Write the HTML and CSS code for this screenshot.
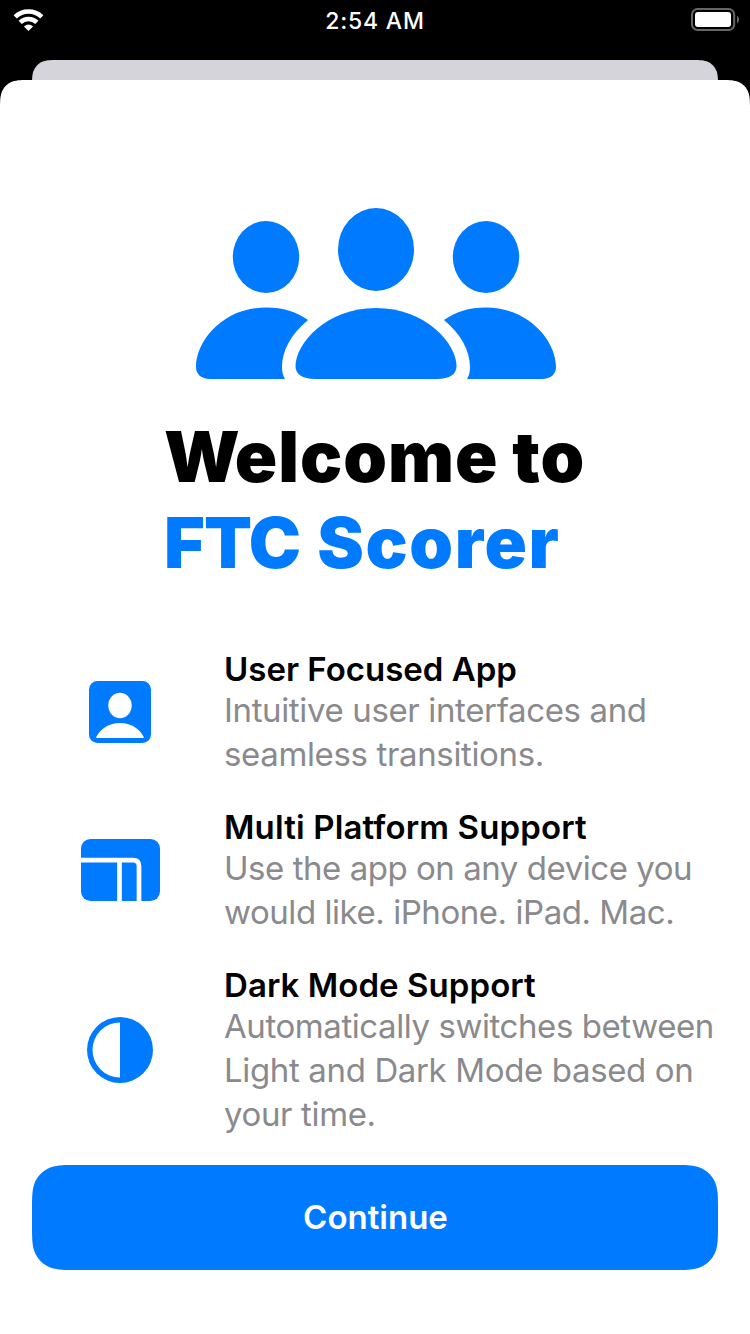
FILE: index.html
```html
<!DOCTYPE html>
<html lang="en">
<head>
<meta charset="utf-8">
<title>Welcome to FTC Scorer</title>
<link rel="stylesheet" href="styles.css">
</head>
<body>
<div class="screen">
  <header class="status">
    <svg class="wifi" viewBox="13 8 32 24" aria-hidden="true">
      <g fill="none" stroke="#fff" stroke-width="4.6">
        <path d="M15.2 16.8A19.2 19.2 0 0 1 41.8 16.8"/>
        <path d="M20.2 22.3A12 12 0 0 1 36.8 22.3"/>
      </g>
      <path fill="#fff" d="M28.5 31L23.9 26.4Q28.5 22.6 33.1 26.4Z"/>
    </svg>
    <time class="clock">2:54 AM</time>
    <svg class="battery" viewBox="690 7 50 26" aria-hidden="true">
      <rect x="692" y="9" width="42.2" height="21" rx="5.5" fill="none" stroke="#666" stroke-width="2"/>
      <rect x="695" y="12" width="36" height="15" rx="3" fill="#fff"/>
      <path fill="#666" d="M737 15.5Q739 17 739 19.5T737 23.5Z"/>
    </svg>
  </header>
  <div class="behind"></div>
  <main class="sheet">
    <svg class="hero" viewBox="190 200 372 185" aria-hidden="true">
      <g fill="#007aff">
        <ellipse cx="266" cy="257" rx="33.2" ry="36"/>
        <ellipse cx="376" cy="249.5" rx="38" ry="41.5"/>
        <ellipse cx="486" cy="257" rx="33.2" ry="36"/>
        <path id="side" d="M210 379C201 379 196 374 196 367C196 341 223 307.5 266 307.5C283 307.5 297 312 308 320C291 334 282 351 282 367C282 372 283 376 285 379Z"/>
        <use href="#side" transform="matrix(-1 0 0 1 752 0)"/>
        <path d="M315 379C302 379 295.5 374 295.5 366C295.5 344 326 308 376 308C426 308 456.5 344 456.5 366C456.5 374 450 379 437 379Z"/>
      </g>
    </svg>
    <h1 class="title"><span class="line t1"><span class="cap">W</span>elcome to</span><span class="line t2"><span class="acronym">FTC</span> Scorer</span></h1>
    <section class="features">
      <article class="feature">
        <svg class="icon" viewBox="80 672 80 80" aria-hidden="true">
          <rect x="89" y="681" width="62" height="62" rx="8.5" fill="#007aff"/>
          <ellipse cx="120" cy="705.5" rx="11.7" ry="12.7" fill="#fff"/>
          <path fill="#fff" d="M97 738Q95.700 738 96.500 736.500C101 728.500 109 723 120 723C131 723 139 728.500 143.500 736.500Q144.300 738 143 738Z"/>
        </svg>
        <div>
          <h2 class="name n1">User Focused App</h2>
          <p class="text"><span class="line a1">Intuitive user interfaces and</span><span class="line a2">seamless transitions.</span></p>
        </div>
      </article>
      <article class="feature">
        <svg class="icon" viewBox="80 830 80 80" aria-hidden="true">
          <rect x="81" y="839" width="79" height="62" rx="9.500" fill="#007aff"/>
          <path fill="none" stroke="#fff" stroke-width="4.7" d="M81 860.2H133Q139 860.2 139 866.2V901M119.500 860.2V901"/>
        </svg>
        <div>
          <h2 class="name n2">Multi Platform Support</h2>
          <p class="text"><span class="line b1">Use the app on any device you</span><span class="line b2">would like. iPhone. iPad. Mac.</span></p>
        </div>
      </article>
      <article class="feature">
        <svg class="icon" viewBox="80 1010 80 80" aria-hidden="true">
          <circle cx="120" cy="1050" r="33" fill="#007aff"/>
          <path fill="#fff" d="M120 1022.500A27.500 27.500 0 0 0 120 1077.500Z"/>
        </svg>
        <div>
          <h2 class="name n3">Dark Mode Support</h2>
          <p class="text"><span class="line c1">Automatically switches between</span><span class="line c2">Light and Dark Mode based on</span><span class="line c3">your time.</span></p>
        </div>
      </article>
    </section>
    <button class="continue" type="button">Continue</button>
  </main>
</div>
</body>
</html>
```
FILE: styles.css
```css
* { box-sizing: border-box; margin: 0; padding: 0; }
body { background: #000; font-family: Inter, "Liberation Sans", sans-serif; }
.screen { width: 750px; height: 1334px; display: flex; flex-direction: column; overflow: hidden; }
svg { display: block; }

.status { height: 60px; flex: none; display: grid; grid-template-columns: 1fr auto 1fr; align-items: start; padding: 7px 10px 0 13px; color: #fff; }
.wifi { width: 32px; height: 24px; margin-top: 1px; }
.clock { font-size: 23px; line-height: 28px; font-weight: 500; letter-spacing: 0.8px; margin-right: 3px; }
.battery { width: 50px; height: 26px; justify-self: end; }

.behind { flex: none; height: 32px; margin: 0 32px; background: #d5d4da; clip-path: path("M27.5 0H658.5C666.4 0 670.4 0 674.63 1.35C679.3 3.04 682.96 6.7 684.65 11.37C686 15.6 686 19.6 686 27.5V32H0V27.5C0 19.6 0 15.6 1.35 11.37C3.04 6.7 6.7 3.04 11.37 1.35C15.6 0 19.6 0 27.5 0Z"); }
.sheet { flex: none; height: 1254px; margin-top: -12px; padding: 120px 32px 0; background: #fff; display: flex; flex-direction: column; align-items: center; clip-path: path("M30.57 0H719.43C728.23 0 732.63 0 737.37 1.5C742.54 3.38 746.62 7.46 748.5 12.63C750 17.37 750 21.77 750 30.57V1254H0V30.57C0 21.77 0 17.37 1.5 12.63C3.38 7.46 7.46 3.38 12.63 1.5C17.37 0 21.77 0 30.57 0Z"); }

.hero { flex: none; width: 372px; height: 185px; margin-left: 2px; }
.line { display: block; white-space: nowrap; width: max-content; }
.title { align-self: flex-start; margin: 29px 0 0 132px; font-size: 70px; line-height: 86px; font-weight: 900; }
.t1 { letter-spacing: 1px; word-spacing: -1px; }
.cap { letter-spacing: -5px; }
.t2 { color: #007aff; letter-spacing: 1.6px; word-spacing: 1.5px; }
.acronym { letter-spacing: -0.9px; }

.features { align-self: stretch; margin-top: 64px; display: flex; flex-direction: column; gap: 32px; }
.feature { display: grid; grid-template-columns: 177px 1fr; column-gap: 15px; align-items: center; }
.icon { width: 80px; height: 80px; margin: 0 0 2px 48px; }
.name { font-size: 33px; line-height: 38px; font-weight: 600; white-space: nowrap; width: max-content; }
.n2 { letter-spacing: 0.14px; }
.n3 { letter-spacing: 0.06px; }
.text { font-size: 33px; line-height: 44px; font-weight: 400; color: #8a8a8e; letter-spacing: -0.36px; }
.b1 { letter-spacing: -0.46px; }
.b2 { letter-spacing: -0.45px; }
.c1 { letter-spacing: -0.43px; }

.continue { align-self: stretch; height: 105px; margin-top: 29px; padding: 0 0 2px 1px; border: 0; background: #007aff; color: #fff; font: 600 33px/40px Inter, "Liberation Sans", sans-serif; clip-path: path("M45.86 0H640.14C653.35 0 659.95 0 667.06 2.25C674.82 5.07 680.93 11.18 683.75 18.94C686 26.05 686 32.65 686 45.86V59.14C686 72.35 686 78.95 683.75 86.06C680.93 93.82 674.82 99.93 667.06 102.75C659.95 105 653.35 105 640.14 105H45.86C32.65 105 26.05 105 18.94 102.75C11.18 99.93 5.07 93.82 2.25 86.06C0 78.95 0 72.35 0 59.14V45.86C0 32.65 0 26.05 2.25 18.94C5.07 11.18 11.18 5.07 18.94 2.25C26.05 0 32.65 0 45.86 0Z"); }
```
